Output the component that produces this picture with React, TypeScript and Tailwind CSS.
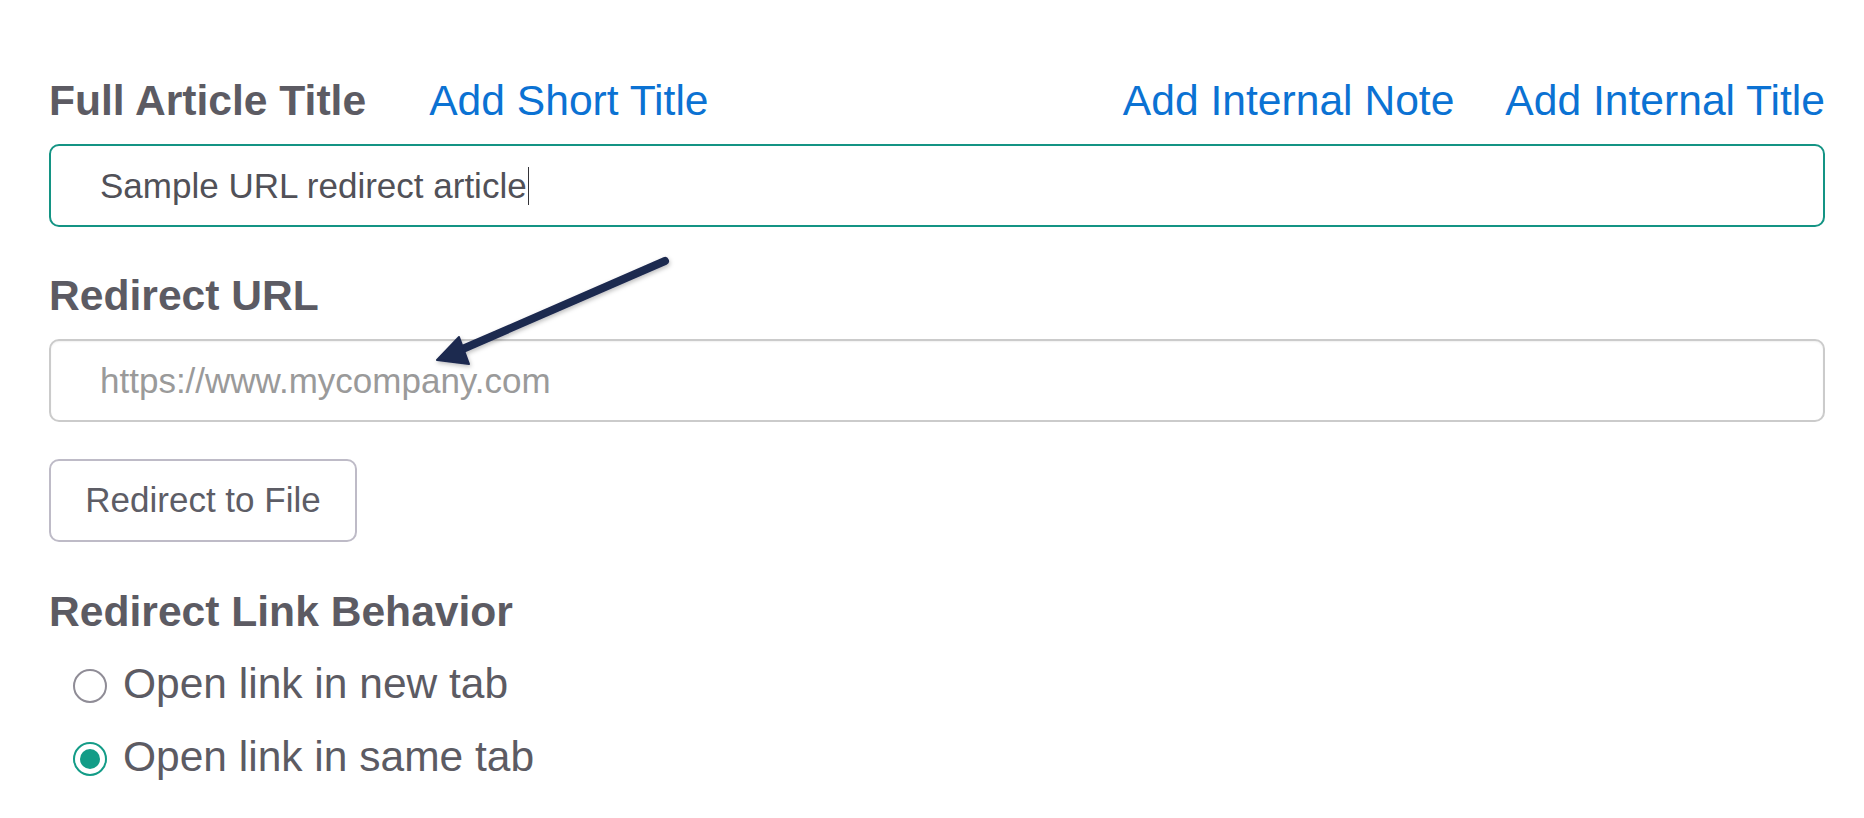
import React from "react";

const headingClass = "text-[42.6px] leading-[48px] font-bold text-[#5c5b63]";
const linkClass = "text-[42.6px] leading-[48px] text-[#0b72d3] cursor-pointer";

function Radio({ label, checked }: { label: string; checked?: boolean }) {
  return (
    <label className="flex items-center gap-[16px] h-[48px] cursor-pointer">
      {checked ? (
        <span className="mt-[3px] flex items-center justify-center w-[34px] h-[34px] rounded-full border-2 border-[#139c87] bg-white">
          <span className="w-[20px] h-[20px] rounded-full bg-[#139c87]" />
        </span>
      ) : (
        <span className="mt-[3px] w-[34px] h-[34px] rounded-full border-2 border-[#8f8c96] bg-white" />
      )}
      <span className="text-[42.5px] leading-[48px] text-[#5c5b63]">{label}</span>
    </label>
  );
}

export default function App() {
  return (
    <div
      className="relative w-full min-h-[818px] bg-white pt-[76px] pl-[49px] pr-[39px]"
      style={{ fontFamily: '"Liberation Sans", Arial, sans-serif' }}
    >
      {/* Title row */}
      <div className="flex items-baseline justify-between">
        <div className="flex items-baseline gap-[63px]">
          <span className={headingClass}>Full Article Title</span>
          <span className={linkClass}>Add Short Title</span>
        </div>
        <div className="flex items-baseline gap-[51px]">
          <span className={linkClass}>Add Internal Note</span>
          <span className={linkClass}>Add Internal Title</span>
        </div>
      </div>

      {/* Title input (focused) */}
      <div className="mt-[20px] flex items-center h-[83px] pl-[49px] border-2 border-[#149484] rounded-[10px] bg-white">
        <span className="text-[35px] leading-[40px] text-[#515158] whitespace-pre">
          Sample URL redirect article
        </span>
        <span className="ml-[1px] w-[1.5px] h-[38px] bg-[#333338]" />
      </div>

      {/* Redirect URL */}
      <div className={`mt-[44px] ${headingClass}`}>Redirect URL</div>
      <input
        type="text"
        placeholder="https://www.mycompany.com"
        className="mt-[20px] block w-full h-[83px] pl-[49px] border-2 border-[#cbcbcb] rounded-[10px] bg-white text-[35px] text-[#515158] placeholder:text-[#9a9a9a] outline-none shadow-[inset_0_1px_2px_rgba(0,0,0,0.06)]"
        style={{ fontFamily: '"Liberation Sans", Arial, sans-serif' }}
      />

      <button
        className="mt-[37px] block w-[308px] h-[83px] border-2 border-[#bebbc7] rounded-[10px] bg-white text-[35px] text-[#5d5d66]"
        style={{ fontFamily: '"Liberation Sans", Arial, sans-serif' }}
      >
        Redirect to File
      </button>

      {/* Link behavior */}
      <div className={`mt-[45px] ${headingClass}`}>Redirect Link Behavior</div>
      <div className="mt-[25px] pl-[24px] flex flex-col gap-[25px]">
        <Radio label="Open link in new tab" />
        <Radio label="Open link in same tab" checked />
      </div>

      {/* Annotation arrow */}
      <svg
        className="absolute left-0 top-0 pointer-events-none"
        width="1864"
        height="818"
        viewBox="0 0 1864 818"
      >
        <defs>
          <filter id="arrowShadow" x="-20%" y="-20%" width="140%" height="140%">
            <feDropShadow dx="1" dy="2" stdDeviation="2" floodColor="#000" floodOpacity="0.25" />
          </filter>
        </defs>
        <g filter="url(#arrowShadow)" fill="#1d2950" stroke="#1d2950">
          <line x1="665" y1="261" x2="458" y2="351" strokeWidth="8" strokeLinecap="round" />
          <polygon points="437,360 459,337 469,364" strokeWidth="2" strokeLinejoin="round" />
        </g>
      </svg>
    </div>
  );
}
